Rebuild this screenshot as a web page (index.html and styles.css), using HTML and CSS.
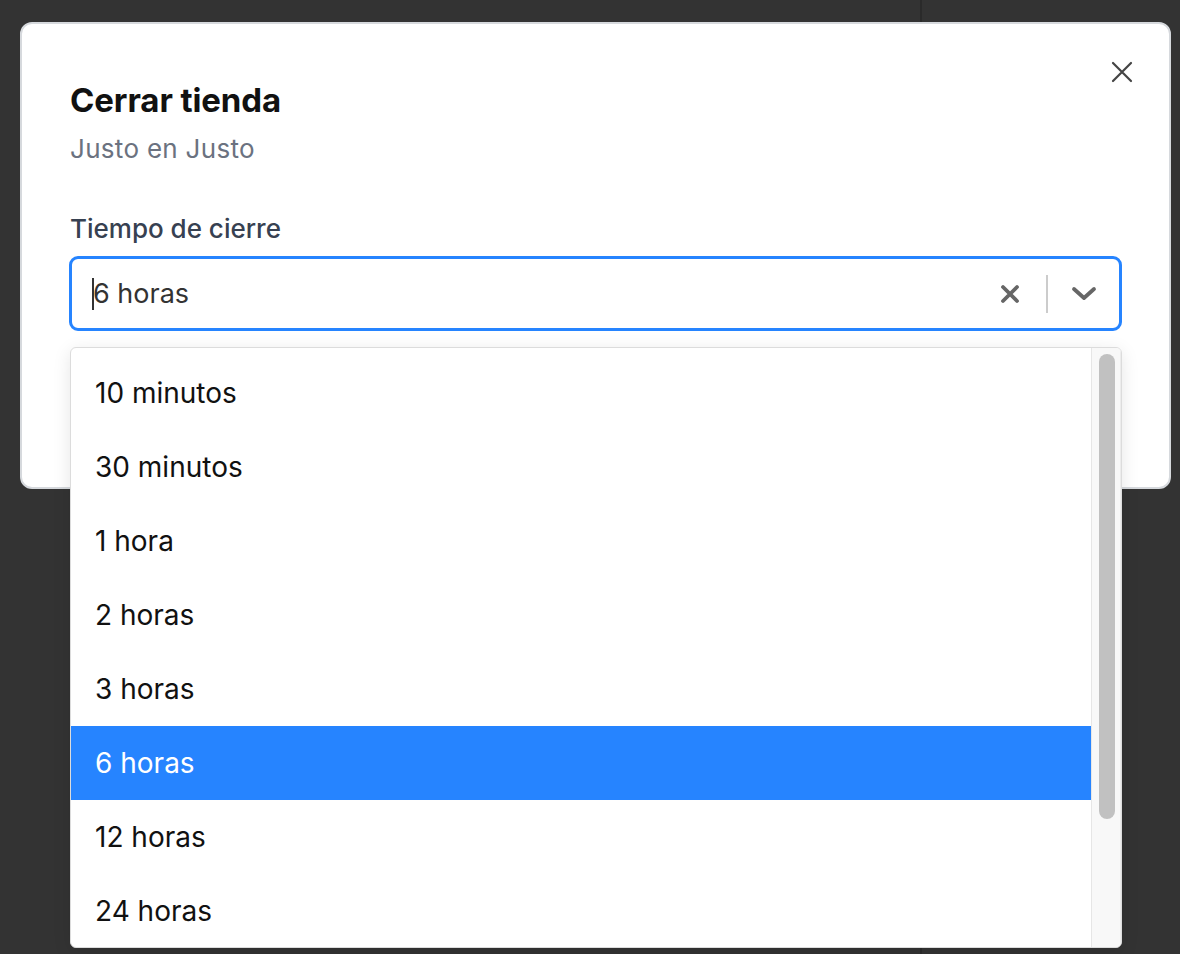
FILE: index.html
```html
<!DOCTYPE html>
<html lang="es">
<head>
<meta charset="utf-8">
<title>Cerrar tienda</title>
<link rel="stylesheet" href="styles.css">
</head>
<body>
<div class="modal">
  <button class="close" aria-label="Cerrar">
    <svg width="22" height="22" viewBox="0 0 22 22"><path d="M2 2 L20 20 M20 2 L2 20" stroke="#444" stroke-width="2.2" stroke-linecap="round" fill="none"/></svg>
  </button>
  <h1 class="title">Cerrar tienda</h1>
  <p class="subtitle">Justo en Justo</p>
  <label class="label">Tiempo de cierre</label>
  <div class="select-wrap">
    <div class="select">
      <div class="value"><span class="caret"></span>6 horas</div>
      <div class="indicators">
        <span class="ind clear">
          <svg width="20" height="20" viewBox="0 0 20 20"><path d="M3 3 L17 17 M17 3 L3 17" stroke="#666" stroke-width="3.8" stroke-linecap="round" fill="none"/></svg>
        </span>
        <span class="sep"></span>
        <span class="ind chevron">
          <svg width="26" height="16" viewBox="0 0 26 16"><path d="M3 3 L13 12 L23 3" stroke="#666" stroke-width="3.8" stroke-linecap="round" stroke-linejoin="round" fill="none"/></svg>
        </span>
      </div>
    </div>
    <div class="menu">
      <ul class="list">
        <li class="opt">10 minutos</li>
        <li class="opt">30 minutos</li>
        <li class="opt">1 hora</li>
        <li class="opt">2 horas</li>
        <li class="opt">3 horas</li>
        <li class="opt selected">6 horas</li>
        <li class="opt">12 horas</li>
        <li class="opt">24 horas</li>
      </ul>
      <div class="track"><div class="thumb"></div></div>
    </div>
  </div>
</div>
</body>
</html>
```

FILE: styles.css
```css
* { box-sizing: border-box; }
html, body { height: 100%; }
body {
  margin: 0;
  padding: 22px 9px 0 20px;
  background: linear-gradient(to right, #333333 920px, #2a2a2a 920px, #2a2a2a 922px, #333333 922px);
  font-family: Inter, "Noto Sans", "Liberation Sans", sans-serif;
  overflow: hidden;
}
.modal {
  position: relative;
  height: 467px;
  background: #fff;
  border: 2px solid #d6d9dd;
  border-radius: 12px;
  padding: 58px 48px 0 48px;
}
.close {
  position: absolute;
  top: 36px;
  right: 35px;
  width: 24px;
  height: 24px;
  padding: 1px;
  border: 0;
  background: none;
  display: flex;
  align-items: center;
  justify-content: center;
}
.title {
  margin: 0;
  font-size: 33px;
  line-height: 36px;
  font-weight: 700;
  letter-spacing: -0.1px;
  color: #111;
}
.subtitle {
  margin: 16px 0 0;
  font-size: 26px;
  line-height: 30px;
  letter-spacing: 0.3px;
  color: #6b7280;
}
.label {
  display: block;
  margin: 50px 0 12px;
  font-size: 26px;
  line-height: 30px;
  font-weight: 500;
  color: #374151;
}
.select-wrap {
  position: relative;
  margin: 0 -1px;
}
.select {
  height: 75px;
  border: 3px solid #2684ff;
  border-radius: 9px;
  display: flex;
  align-items: center;
  background: #fff;
}
.value {
  flex: 1;
  padding-left: 21px;
  font-size: 27px;
  color: #333;
  display: flex;
  align-items: center;
}
.caret {
  display: inline-block;
  width: 2px;
  height: 32px;
  background: #333;
  margin-right: -1px;
  margin-left: -1px;
}
.indicators {
  display: flex;
  align-items: center;
  height: 100%;
}
.ind {
  display: flex;
  align-items: center;
  justify-content: center;
  width: 36px;
}
.clear { margin-right: 18px; }
.sep {
  width: 2px;
  height: 38px;
  background: #cccccc;
}
.chevron { margin-left: 18px; margin-right: 17px; }
.menu {
  position: absolute;
  left: 1px;
  right: 0;
  top: calc(100% + 16px);
  height: 601px;
  background: #fff;
  border: 1px solid #dcdcdc;
  border-radius: 6px;
  box-shadow: 0 4px 18px rgba(0,0,0,0.10);
  display: flex;
  overflow: hidden;
}
.list {
  list-style: none;
  margin: 0;
  padding: 8px 0 0;
  flex: 1;
}
.opt {
  height: 74px;
  display: flex;
  align-items: center;
  padding-left: 24px;
  font-size: 28px;
  color: #111;
}
.opt.selected {
  background: #2684ff;
  color: #fff;
}
.track {
  width: 30px;
  background: #f8f8f8;
  border-left: 1px solid #e6e6e6;
  border-right: 1px solid #ececec;
  padding: 6px 0 0 7px;
}
.thumb {
  width: 16px;
  height: 465px;
  background: #c1c1c1;
  border-radius: 8px;
}
```
